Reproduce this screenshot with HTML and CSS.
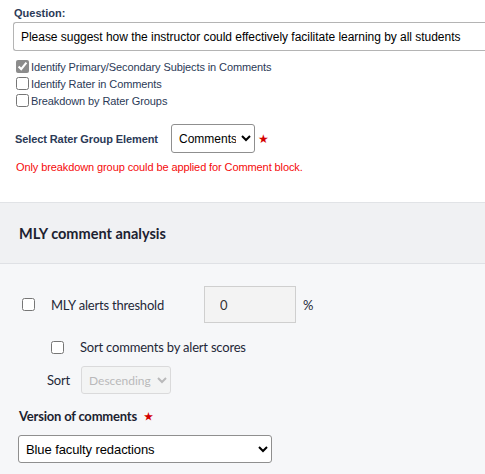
FILE: index.html
```html
<!DOCTYPE html>
<html>
<head>
<meta charset="utf-8">
<link rel="stylesheet" href="styles.css">
</head>
<body>
<div class="top">
  <div class="q-label">Question:</div>
  <input class="q-input" type="text" value="Please suggest how the instructor could effectively facilitate learning by all students">
  <div class="opts">
    <label class="opt"><input type="checkbox" class="cb-done" checked><span>Identify Primary/Secondary Subjects in Comments</span></label>
    <label class="opt"><input type="checkbox"><span>Identify Rater in Comments</span></label>
    <label class="opt"><input type="checkbox"><span>Breakdown by Rater Groups</span></label>
  </div>
  <div class="rater-row">
    <span class="rater-label">Select Rater Group Element</span>
    <select class="rater-select"><option>Comments</option></select>
    <span class="star">&#9733;</span>
  </div>
  <div class="error">Only breakdown group could be applied for Comment block.</div>
</div>
<div class="mly">
  <div class="mly-head">MLY comment analysis</div>
  <div class="mly-body">
    <div class="row1">
      <input type="checkbox" class="cb1">
      <span class="row1-label">MLY alerts threshold</span>
      <input type="text" class="threshold" value="0" disabled>
      <span class="pct">%</span>
    </div>
    <div class="row2">
      <input type="checkbox" class="cb2">
      <span>Sort comments by alert scores</span>
    </div>
    <div class="row3">
      <span class="sort-label">Sort</span>
      <select class="sort-select" disabled><option>Descending</option></select>
    </div>
    <div class="ver-label">Version of comments <span class="star2">&#9733;</span></div>
    <select class="ver-select"><option>Blue faculty redactions</option></select>
  </div>
</div>
</body>
</html>
```
FILE: styles.css
```css
html, body {
  margin: 0;
  padding: 0;
  background: #f6f7f9;
}
body {
  width: 485px;
  height: 474px;
  overflow: hidden;
  font-family: "Liberation Sans", Arial, sans-serif;
}
.top {
  background: #fff;
  padding: 7px 0 0 13px;
  height: 202px;
  box-sizing: border-box;
  overflow: hidden;
}
.q-label {
  font-size: 11px;
  font-weight: bold;
  color: #2b3a57;
  line-height: 13px;
  margin-left: 1px;
}
.q-input {
  display: block;
  margin: 2px 0 0 0;
  width: 480px;
  height: 29px;
  box-sizing: border-box;
  border: 1px solid #b4b4b4;
  border-right: none;
  border-radius: 3px 0 0 3px;
  padding: 0 7px;
  font-family: "Liberation Sans", Arial, sans-serif;
  font-size: 12px;
  letter-spacing: -0.03px;
  color: #000;
  background: #fff;
  outline: none;
}
.opts {
  margin-top: 7px;
  display: flex;
  flex-direction: column;
}
.opt {
  display: flex;
  align-items: center;
  height: 17px;
  font-size: 11px;
  letter-spacing: -0.1px;
  color: #2b3a57;
}
.opt input {
  margin: 0 2px 0 3px;
  width: 13px;
  height: 13px;
}
.cb-done {
  accent-color: #8c8c8c;
}
.rater-row {
  display: flex;
  align-items: center;
  margin-top: 15px;
  height: 29px;
}
.rater-label {
  font-size: 11px;
  font-weight: bold;
  letter-spacing: -0.1px;
  color: #2b3a57;
  margin-left: 2px;
  width: 156px;
}
.rater-select {
  width: 84px;
  height: 29px;
  font-family: "Liberation Sans", Arial, sans-serif;
  font-size: 12px;
  color: #000;
  background: #fff;
  border: 1px solid #8f8f8f;
  border-radius: 3px;
  padding: 0 2px 0 3px;
}
.star {
  color: #d40000;
  font-size: 12px;
  margin-left: 3px;
}
.error {
  font-size: 11px;
  letter-spacing: -0.1px;
  color: #f50a0a;
  margin: 8px 0 0 3px;
  line-height: 13px;
}
.mly {
  border-top: 1px solid #e1e3e6;
}
.mly-head {
  background: #f0f1f3;
  height: 60px;
  border-bottom: 1px solid #dfe1e5;
  display: flex;
  align-items: center;
  padding-left: 19px;
  font-family: Lato, sans-serif;
  font-weight: bold;
  font-size: 14.5px;
  color: #1c2230;
}
.mly-body {
  padding: 22px 0 0 19px;
  font-family: Lato, sans-serif;
  font-size: 13px;
  letter-spacing: -0.2px;
  color: #1f2838;
}
.row1 {
  display: flex;
  align-items: center;
  height: 37px;
}
.cb1 {
  margin: 0 0 0 3px;
  width: 13px;
  height: 13px;
}
.row1-label {
  margin-left: 16px;
  width: 153px;
}
.threshold {
  width: 92px;
  height: 37px;
  box-sizing: border-box;
  background: #f3f3f3;
  border: 1px solid #cfcfcf;
  padding: 0 0 0 15px;
  font-family: Lato, sans-serif;
  font-size: 13px;
  color: #333;
}
.pct {
  margin-left: 7px;
}
.row2 {
  display: flex;
  align-items: center;
  height: 20px;
  margin-top: 14px;
  padding-left: 32px;
}
.cb2 {
  margin: 0 16px 0 0;
  width: 13px;
  height: 13px;
}
.row3 {
  display: flex;
  align-items: center;
  margin-top: 9px;
  padding-left: 28px;
  height: 28px;
}
.sort-label {
  width: 34px;
}
.sort-select {
  width: 90px;
  height: 28px;
  font-family: Lato, sans-serif;
  font-size: 12px;
  letter-spacing: 0;
  color: #a0a0a0;
  background: #f3f3f3;
  border: 1px solid #cfcfcf;
  border-radius: 3px;
  padding: 0 0 0 3px;
}
.ver-label {
  margin-top: 13px;
  font-weight: bold;
  font-size: 13px;
  line-height: 18px;
  color: #1c2230;
}
.star2 {
  color: #d40000;
  font-size: 10px;
  margin-left: 4px;
  vertical-align: 1px;
}
.ver-select {
  display: block;
  margin: 10px 0 0 -1px;
  width: 254px;
  height: 28px;
  font-family: "Liberation Sans", Arial, sans-serif;
  font-size: 13px;
  letter-spacing: -0.1px;
  color: #000;
  background: #fff;
  border: 1px solid #8f8f8f;
  border-radius: 3px;
  padding: 0 3px;
}
```
